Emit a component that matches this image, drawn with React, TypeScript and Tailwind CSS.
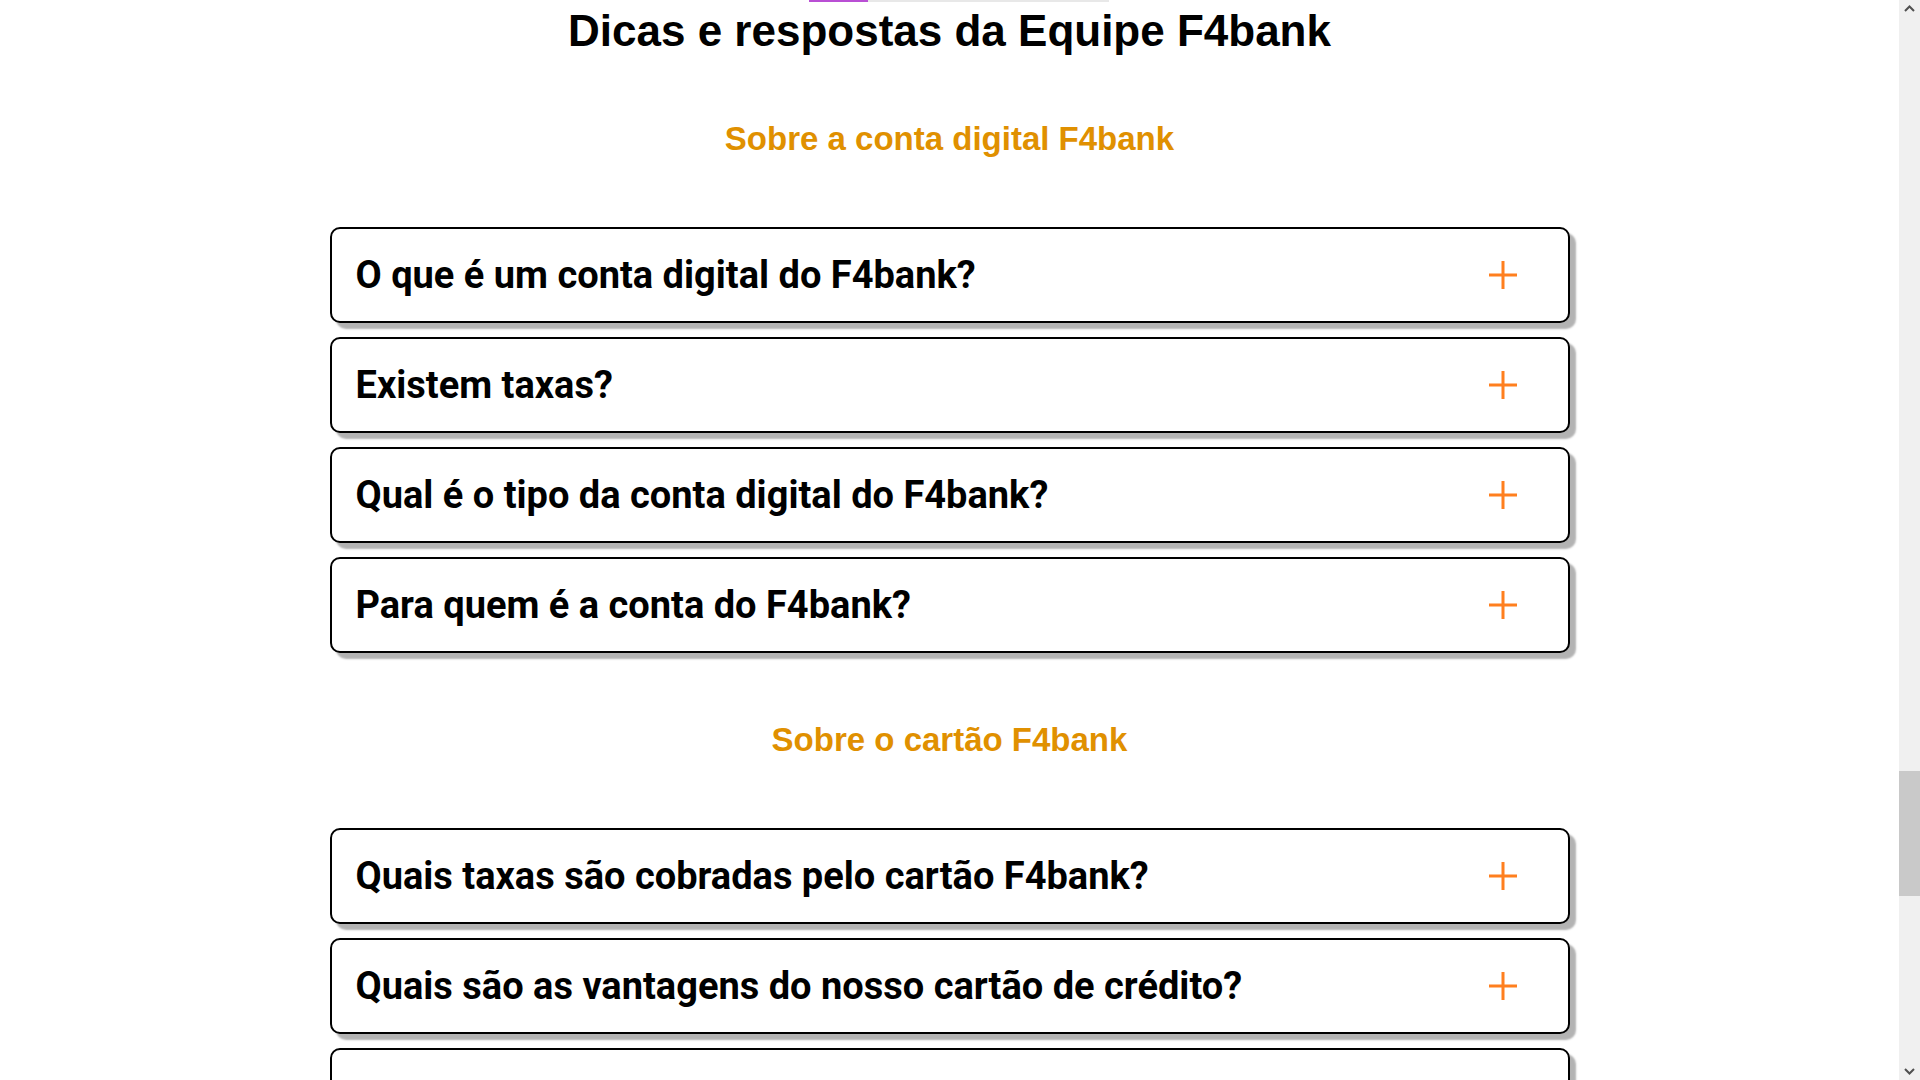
function Plus() {
  return (
    <svg width="30" height="30" viewBox="0 0 30 30" className="shrink-0">
      <path d="M15 1 V29 M1 15 H29" stroke="#ff7f1e" strokeWidth="3" fill="none" />
    </svg>
  );
}

function Question({ text }: { text: string }) {
  return (
    <div className="flex h-[96px] shrink-0 items-center justify-between rounded-[10px] border-2 border-black bg-white pl-6 pr-[50px] shadow-[6px_6px_2px_#b3b3b3] cursor-pointer">
      <span className="font-['Roboto',sans-serif] text-[38px] font-bold text-black">{text}</span>
      <Plus />
    </div>
  );
}

function Scrollbar() {
  return (
    <div className="flex h-full w-[21px] shrink-0 flex-col bg-[#f0f0f0]">
      <div className="flex h-[17px] items-center justify-center">
        <svg width="11" height="7" viewBox="0 0 11 7">
          <path d="M1 6 L5.5 1.5 L10 6" stroke="#505050" strokeWidth="2" fill="none" />
        </svg>
      </div>
      <div className="h-[754px]" />
      <div className="h-[125px] bg-[#c9c9c9]" />
      <div className="flex-1" />
      <div className="flex h-[17px] items-center justify-center">
        <svg width="11" height="7" viewBox="0 0 11 7">
          <path d="M1 1 L5.5 5.5 L10 1" stroke="#505050" strokeWidth="2" fill="none" />
        </svg>
      </div>
    </div>
  );
}

export default function App() {
  const conta = [
    'O que é um conta digital do F4bank?',
    'Existem taxas?',
    'Qual é o tipo da conta digital do F4bank?',
    'Para quem é a conta do F4bank?',
  ];
  // the last card is cut by the bottom of the window, only its top edge shows
  const cartao = [
    'Quais taxas são cobradas pelo cartão F4bank?',
    'Quais são as vantagens do nosso cartão de crédito?',
    '',
  ];

  return (
    <div className="flex h-screen w-full overflow-hidden bg-white">
      <main className="min-w-0 flex-1 overflow-hidden font-['Liberation_Sans',Arial,sans-serif]">
        <div className="flex h-[2px]">
          <div className="ml-[809px] w-[59px] bg-[#b94fd4]" />
          <div className="w-[241px] bg-[#e8e8e8]" />
        </div>
        <h1 className="mt-1 text-center text-[44px] leading-[50px] font-bold text-black">
          Dicas e respostas da Equipe F4bank
        </h1>

        <h2 className="mt-16 text-center text-[33px] leading-[38px] font-bold text-[#e09000]">
          Sobre a conta digital F4bank
        </h2>
        <div className="mx-auto mt-[69px] flex w-[1240px] flex-col gap-[14px]">
          {conta.map((q, i) => (
            <Question key={i} text={q} />
          ))}
        </div>

        <h2 className="mt-[68px] text-center text-[33px] leading-[38px] font-bold text-[#e09000]">
          Sobre o cartão F4bank
        </h2>
        <div className="mx-auto mt-[69px] flex w-[1240px] flex-col gap-[14px]">
          {cartao.map((q, i) => (
            <Question key={i} text={q} />
          ))}
        </div>
      </main>
      <Scrollbar />
    </div>
  );
}
